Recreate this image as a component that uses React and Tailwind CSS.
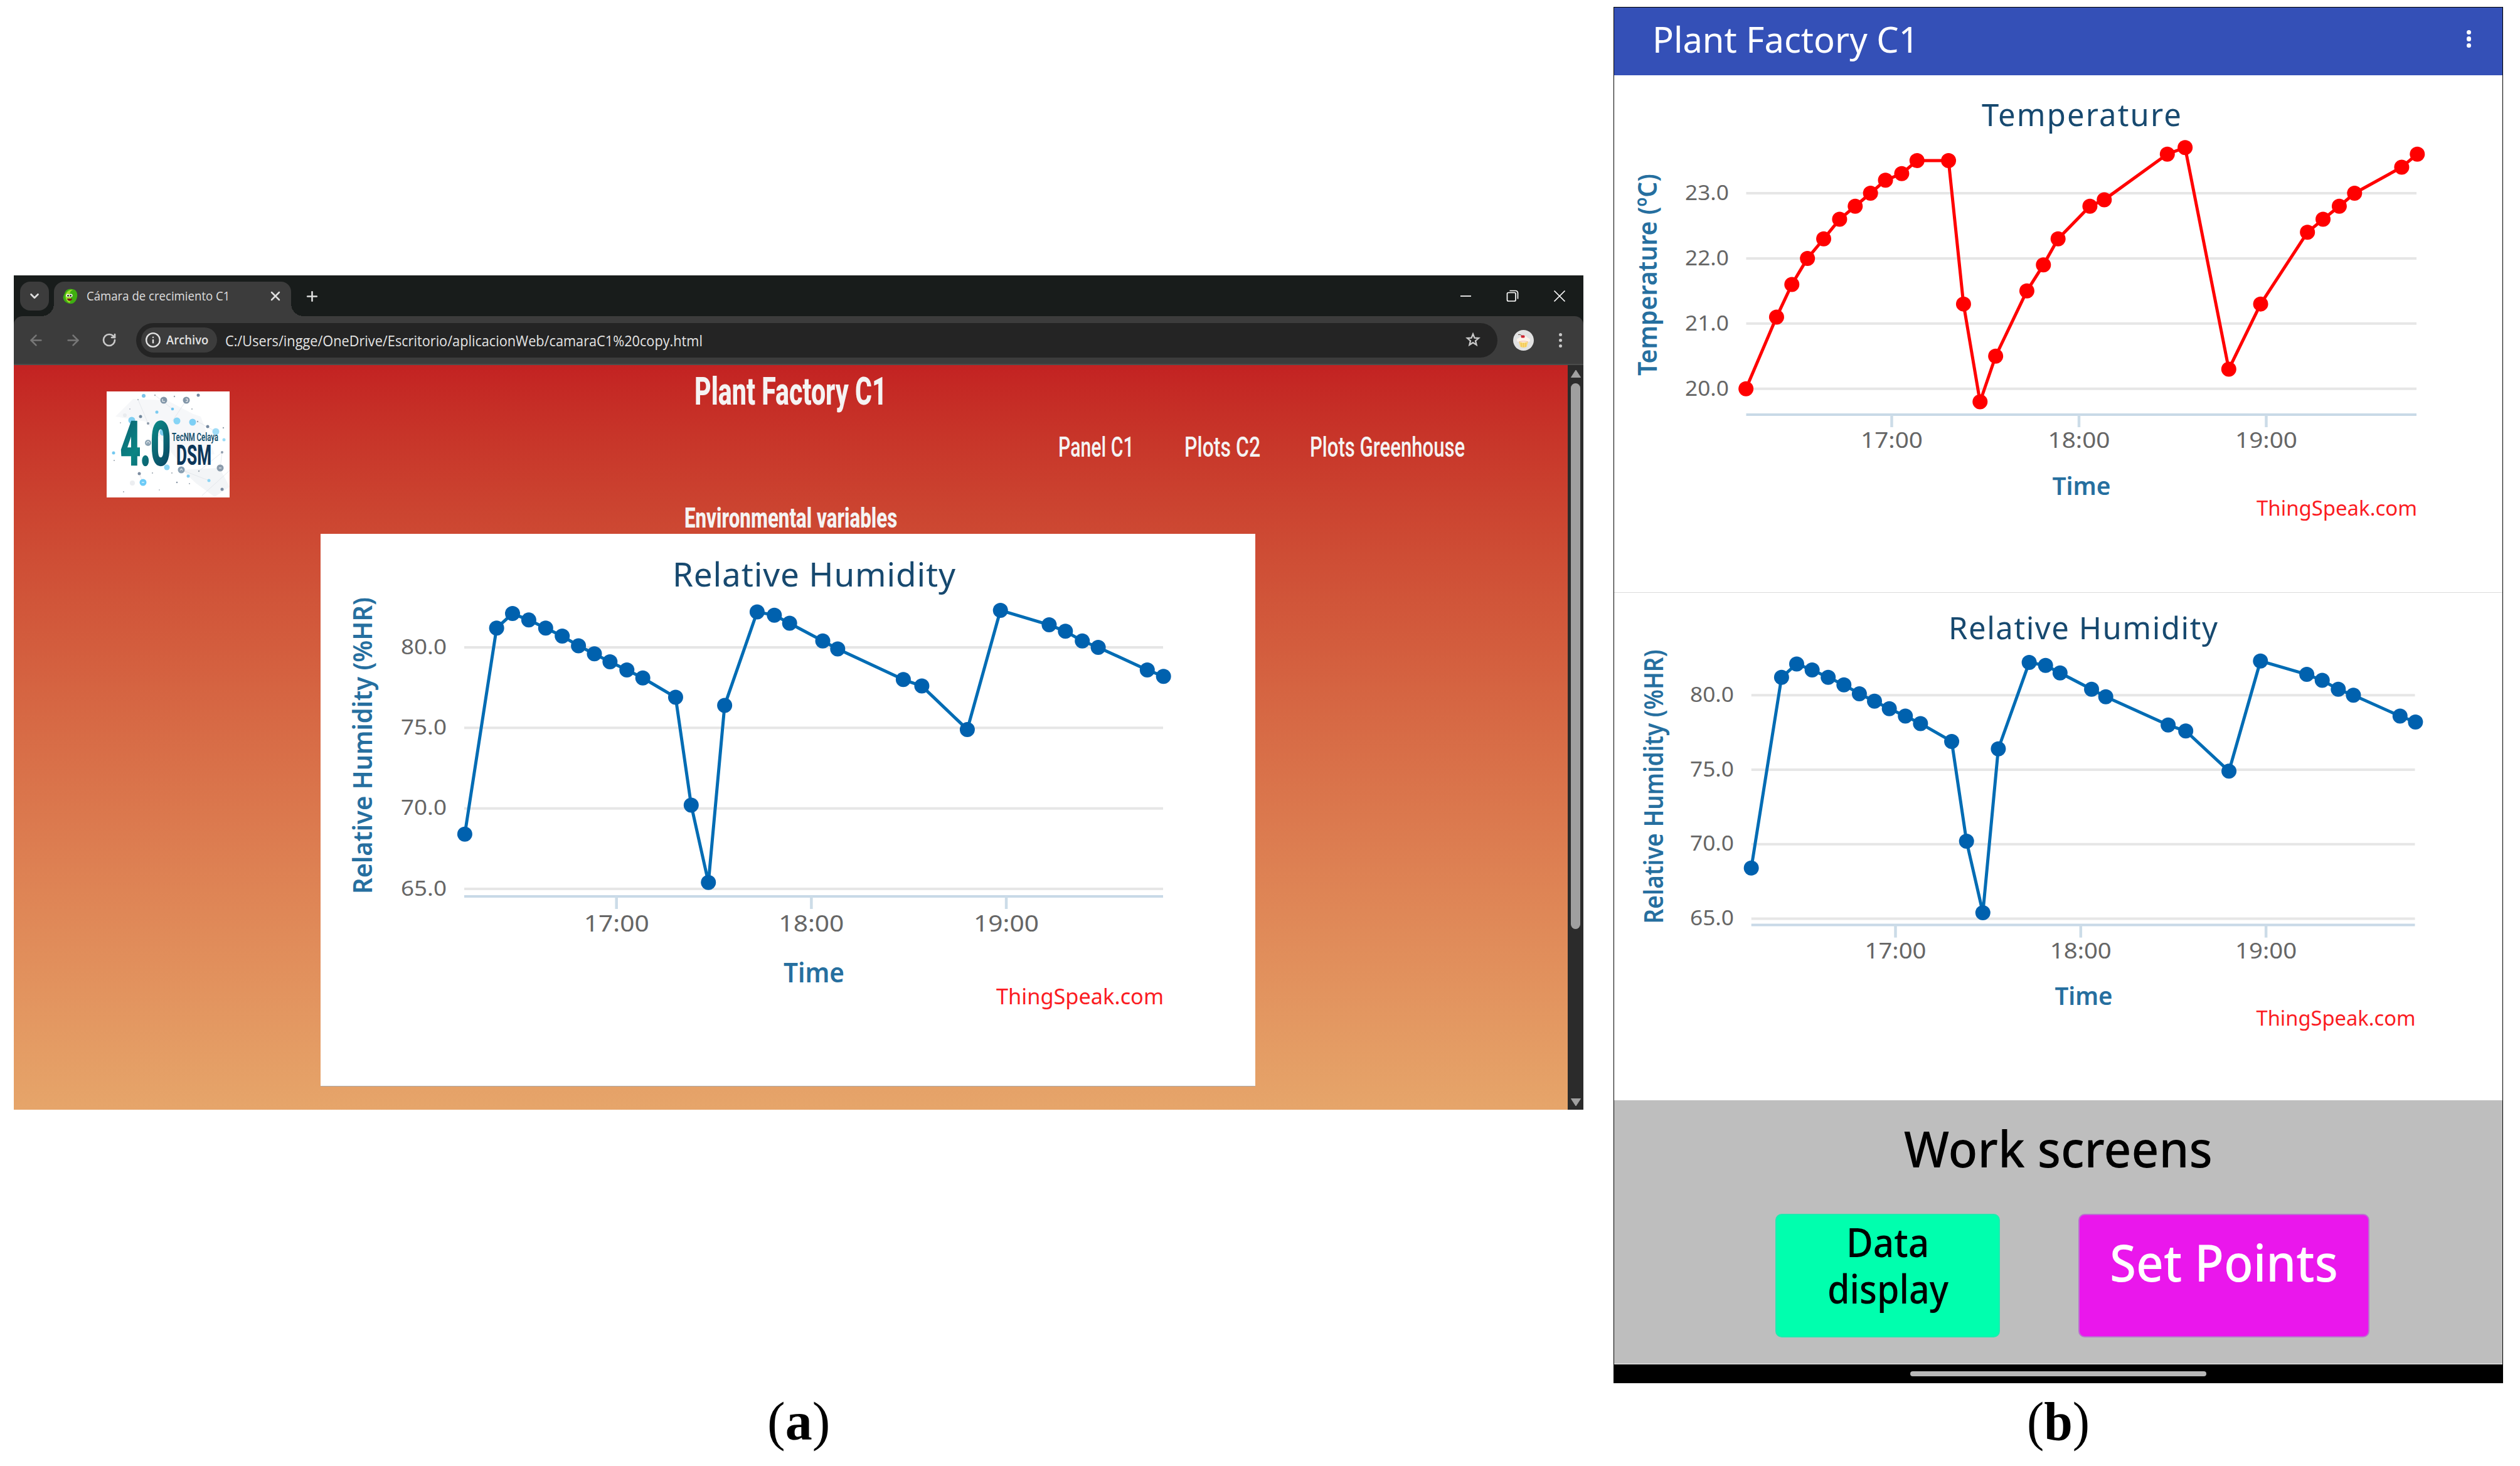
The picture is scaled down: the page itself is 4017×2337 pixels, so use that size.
import { useLayoutEffect, useRef, useState } from 'react';
import { ArrowLeft, ArrowRight, ChevronDown, Info, Plus, RotateCw, X } from 'lucide-react';

// minutes relative to 17:00
const TIMES = [
  -46.7, -36.9, -32, -27, -21.8, -16.7, -11.7, -6.8, -2, 3.2, 8.1, 18.2, 23, 28.3, 33.3,
  43.3, 48.6, 53.3, 63.5, 68.1, 88.3, 94, 108, 118.2, 133.2, 138.2, 143.4, 148.3, 163.4, 168.4,
];

const HUMIDITY = [
  68.4, 81.2, 82.1, 81.7, 81.2, 80.7, 80.1, 79.6, 79.1, 78.6, 78.1, 76.9, 70.2, 65.4, 76.4,
  82.2, 82, 81.5, 80.4, 79.9, 78, 77.6, 74.9, 82.3, 81.4, 81, 80.4, 80, 78.6, 78.2,
];

const TEMPERATURE = [
  20, 21.1, 21.6, 22, 22.3, 22.6, 22.8, 23, 23.2, 23.3, 23.5, 23.5, 21.3, 19.8, 20.5,
  21.5, 21.9, 22.3, 22.8, 22.9, 23.6, 23.7, 20.3, 21.3, 22.4, 22.6, 22.8, 23, 23.4, 23.6,
];

const webHumidityChart = {
  width: 1490,
  height: 881,
  color: '#0061ae',
  lineColor: '#006cb4',
  values: HUMIDITY,
  left: 229,
  right: 1343,
  originX: 471.7,
  perMinute: 5.178,
  ticks: [80, 75, 70, 65],
  topY: 181,
  perUnit: 25.67,
  axisY: 578,
  title: { text: 'Relative Humidity', x: 561, y: 84, length: 451, size: 53 },
  yTitle: { text: 'Relative Humidity (%HR)', x: 82, y: 337.5, length: 473, size: 42 },
  yLabel: { x: 200, length: 73, size: 33.5, offset: 10.5 },
  xLabel: { y: 634, length: 104, size: 37 },
  time: { x: 786.5, y: 715, length: 97, size: 43 },
  credit: { y: 750, length: 267, size: 35 },
};

const appTemperatureChart = {
  width: 1416,
  height: 824,
  color: '#ff0000',
  lineColor: '#ff0000',
  values: TEMPERATURE,
  left: 210.5,
  right: 1279,
  originX: 442.5,
  perMinute: 4.975,
  ticks: [23, 22, 21, 20],
  topY: 188,
  perUnit: 103.9,
  axisY: 541,
  title: { text: 'Temperature', x: 586, y: 81, length: 318, size: 49 },
  yTitle: { text: 'Temperature (ºC)', x: 68, y: 318, length: 322, size: 41 },
  yLabel: { x: 182, length: 70, size: 32, offset: 11 },
  xLabel: { y: 594, length: 99, size: 35 },
  time: { x: 745, y: 669, length: 93, size: 40 },
  credit: { y: 702, length: 256, size: 33 },
};

const appHumidityChart = {
  width: 1416,
  height: 809,
  color: '#0061ae',
  lineColor: '#006cb4',
  values: HUMIDITY,
  left: 218.7,
  right: 1276.5,
  originX: 448.5,
  perMinute: 4.922,
  ticks: [80, 75, 70, 65],
  topY: 163.3,
  perUnit: 23.74,
  axisY: 529.6,
  title: { text: 'Relative Humidity', x: 533, y: 74, length: 429, size: 49 },
  yTitle: { text: 'Relative Humidity (%HR)', x: 77.5, y: 309, length: 437, size: 41 },
  yLabel: { x: 190, length: 70, size: 32, offset: 10.5 },
  xLabel: { y: 582.6, length: 98, size: 35 },
  time: { x: 748.5, y: 656.6, length: 92, size: 40 },
  credit: { y: 690, length: 254, size: 33 },
};

// Squeezes or stretches one line of text to a fixed width
const FitText = ({ width, className = '', children }) => {
  const ref = useRef(null);
  const [scale, setScale] = useState(1);

  useLayoutEffect(() => {
    setScale(width / ref.current.offsetWidth);
  }, [width]);

  return (
    <span className="inline-block whitespace-nowrap" style={{ width }}>
      <span
        ref={ref}
        className={`inline-block origin-left ${className}`}
        style={{ transform: `scaleX(${scale})` }}
      >
        {children}
      </span>
    </span>
  );
};

const Chart = ({ chart }) => {
  const { title, yTitle, yLabel, xLabel, time, credit } = chart;
  const toX = (minute) => chart.originX + minute * chart.perMinute;
  const toY = (value) => chart.topY + (chart.ticks[0] - value) * chart.perUnit;
  const points = chart.values.map((value, i) => [toX(TIMES[i]), toY(value)]);

  return (
    <svg
      width={chart.width}
      height={chart.height}
      viewBox={`0 0 ${chart.width} ${chart.height}`}
      className="block font-['Noto_Sans','Open_Sans',sans-serif]"
    >
      <text x={title.x} y={title.y} fontSize={title.size} textLength={title.length} lengthAdjust="spacing" fill="#17496f">
        {title.text}
      </text>

      {/* grid */}
      {chart.ticks.map((tick) => (
        <g key={tick}>
          <line x1={chart.left} x2={chart.right} y1={toY(tick)} y2={toY(tick)} stroke="#e6e6e6" strokeWidth="4" />
          <text
            x={yLabel.x + 1 - yLabel.length}
            y={toY(tick) + yLabel.offset}
            fontSize={yLabel.size}
            textLength={yLabel.length}
            lengthAdjust="spacingAndGlyphs"
            fill="#666"
          >
            {tick.toFixed(1)}
          </text>
        </g>
      ))}

      {/* time axis */}
      <line x1={chart.left} x2={chart.right} y1={chart.axisY} y2={chart.axisY} stroke="#c8d9e7" strokeWidth="4" />
      {['17:00', '18:00', '19:00'].map((label, i) => (
        <g key={label}>
          <line x1={toX(i * 60)} x2={toX(i * 60)} y1={chart.axisY} y2={chart.axisY + 20} stroke="#ccdce8" strokeWidth="4.5" />
          <text
            x={toX(i * 60) - xLabel.length / 2}
            y={xLabel.y}
            fontSize={xLabel.size}
            textLength={xLabel.length}
            lengthAdjust="spacingAndGlyphs"
            fill="#666"
          >
            {label}
          </text>
        </g>
      ))}

      <text
        transform={`translate(${yTitle.x} ${yTitle.y + yTitle.length / 2}) rotate(-90)`}
        fontSize={yTitle.size}
        fontWeight="600"
        textLength={yTitle.length}
        lengthAdjust="spacingAndGlyphs"
        fill="#266f9f"
      >
        {yTitle.text}
      </text>
      <text
        x={time.x - time.length / 2}
        y={time.y}
        fontSize={time.size}
        fontWeight="600"
        textLength={time.length}
        lengthAdjust="spacingAndGlyphs"
        fill="#266f9f"
      >
        Time
      </text>
      <text
        x={chart.right + 1 - credit.length}
        y={credit.y}
        fontSize={credit.size}
        textLength={credit.length}
        lengthAdjust="spacingAndGlyphs"
        fill="#fb1b22"
      >
        ThingSpeak.com
      </text>

      {/* series */}
      <polyline points={points.map((p) => p.join(',')).join(' ')} fill="none" stroke={chart.lineColor} strokeWidth="5" strokeLinejoin="round" />
      {points.map(([x, y]) => (
        <circle key={x} cx={x} cy={y} r="12" fill={chart.color} />
      ))}
    </svg>
  );
};

const Favicon = () => (
  <svg width="26" height="26" viewBox="0 0 26 26">
    <path d="M4 9C5 3 11 0 17 2c6 1 8 7 7 12s-3 9-8 11C9 26 3 22 2 17c-1-2 0-5 2-8z" fill="#3fae12" />
    <path d="M6 9c3-5 8-7 11-6-4 2-5 4-4 7 2 3 1 10-1 14C7 22 4 15 6 9z" fill="#9be02a" />
    <circle cx="9" cy="12" r="2.6" fill="#fff" />
    <circle cx="14" cy="12" r="2.6" fill="#fff" />
    <circle cx="9.5" cy="12.4" r="1.3" fill="#111" />
    <circle cx="13.6" cy="12.4" r="1.3" fill="#111" />
    <path d="M8 17h8c-1 5-7 5-8 0z" fill="#7a1420" />
  </svg>
);

const StarIcon = () => (
  <svg width="26" height="26" viewBox="0 0 26 26" className="ml-auto" fill="none" stroke="#c9c9c9" strokeWidth="2.3" strokeMiterlimit="5">
    <path d="M13 3.500L15.470 9.600L22.030 10.060L16.990 14.300L18.580 20.700L13 17.200L7.420 20.700L9 14.300L3.970 10.060L10.530 9.600Z" />
  </svg>
);

const Avatar = () => (
  <svg width="33" height="33" viewBox="0 0 33 33">
    <circle cx="16.5" cy="16.5" r="16.5" fill="#e2e2e2" />
    <path d="M9 18h15l-2.500 9q-5 2-10 0z" fill="#f8d873" />
    <path d="M13 20l.5 7M16.500 20v7.500M20 20l-.5 7" stroke="#efc04f" strokeWidth="0.900" />
    <path d="M6 17c-.5-3 2-4 3.500-4 1-2.500 4-3.500 7-3.500s6 1 7 3.500c2 0 4 1.500 3.500 4-.5 2-3 2.500-4.500 2-3 1.500-9 1.500-12 0-1.500.5-4 0-4.500-2z" fill="#fdf3ea" />
    <path d="M9 19c4-1.500 11-1.500 15 0" stroke="#f1b99d" fill="none" />
    <rect x="12.500" y="8.500" width="6" height="4" rx="1.500" fill="#cb2330" />
    <path d="M13.500 9c-1-1.500-3-2-5.500-1.500" stroke="#5b4038" fill="none" />
  </svg>
);

const LOGO_DOTS = [
  [59, 7, 3, '#7cc4ea'], [91, 14, 5.5, '#8296a8'], [127, 14, 5.5, '#8296a8'], [146, 6, 2.5, '#7488a0'],
  [105, 28, 2.3, '#6cc4f0'], [80, 33, 2.5, '#7ccbf0'], [54, 40, 2.5, '#70869c'], [40, 46, 5.5, '#80d0f2'],
  [112, 47, 5.5, '#86d4f5'], [137, 49, 5.5, '#7dcff5'], [161, 56, 2.5, '#7488a0'], [174, 64, 5.5, '#a0dcf7'],
  [187, 77, 2.5, '#9cdcf7'], [90, 65, 5.5, '#80cdf0'], [66, 82, 5, '#8da3b3'], [11, 98, 2.5, '#74c9f0'],
  [184, 97, 2, '#8f9cad'], [181, 122, 5.5, '#8c9cac'], [119, 125, 5.5, '#8aa0b2'], [96, 121, 4.5, '#8ed6f5'],
  [52, 131, 2.5, '#7c8da1'], [130, 135, 2.5, '#84cff3'], [58, 145, 5.5, '#6ccbf7'], [163, 142, 2.5, '#8fd5f4'],
  [184, 156, 2.5, '#7c8da1'], [41, 146, 4, '#eceef1'], [29, 38, 3, '#e8ebee'], [50, 13, 1, '#9aa4af'],
  [77, 6, 1.2, '#a6adb5'], [108, 8, 1.2, '#9aa4af'], [136, 28, 1, '#9aa4af'], [66, 51, 2, '#8c99a8'],
  [145, 48, 1.2, '#9aa4af'], [186, 58, 1.2, '#9aa4af'], [12, 110, 1, '#9aa4af'], [73, 130, 1, '#9aa4af'],
  [112, 145, 1.3, '#8c99a8'], [132, 147, 1, '#9aa4af'], [104, 130, 1, '#9aa4af'], [27, 160, 1, '#9aa4af'],
  [84, 157, 1, '#b4bbc4'], [147, 127, 1.2, '#9aa4af'], [22, 50, 1, '#b4bbc4'], [37, 28, 1, '#b4bbc4'],
];

const Logo = () => (
  <svg width="196" height="169" viewBox="0 0 196 169" className="font-['Roboto',sans-serif]">
    <defs>
      <linearGradient id="logoInk" x1="0" y1="0" x2="1" y2="1">
        <stop offset="0" stopColor="#0a5a6e" />
        <stop offset="0.45" stopColor="#0b8584" />
        <stop offset="1" stopColor="#0b3358" />
      </linearGradient>
    </defs>
    <rect width="196" height="169" fill="#fff" />
    <path d="M14 40L42 12l54 2 42 22 12 4 22 60-60 8-50-60z" fill="#f6f7f9" />
    <path d="M120 125l60-3 16 30-24 16-30-22z" fill="#f3f5f7" />
    <path
      d="M50 13l16 38M77 6l28 22M127 14l-22 33M145 48l29 16M184 97l-37 30M119 125l44 17M58 145l-6-14M152 166l44-40M66 82l24-17M184 97l-3 25"
      stroke="#dfe3e8"
      strokeWidth="0.8"
    />
    {LOGO_DOTS.map(([x, y, r, fill]) => (
      <circle key={`${x}-${y}`} cx={x} cy={y} r={r} fill={fill} />
    ))}
    <path d="M89 12v4h4M126 12h3v4h-3M56 145h4M179 122h4M117 126l2-3 2 3M64 83v-2l2-2 2 2v2" stroke="#fff" fill="none" />
    <text
      x="22"
      y="117"
      fontSize="97"
      fontWeight="800"
      textLength="80"
      lengthAdjust="spacingAndGlyphs"
      fill="url(#logoInk)"
      stroke="url(#logoInk)"
      strokeWidth="2.5"
    >
      4.0
    </text>
    <text x="104" y="78.5" fontSize="18" fontWeight="600" textLength="74" lengthAdjust="spacingAndGlyphs" fill="#14506e">
      TecNM Celaya
    </text>
    <text x="111" y="116.5" fontSize="45" fontWeight="800" textLength="56" lengthAdjust="spacingAndGlyphs" fill="#0d3659">
      DSM
    </text>
  </svg>
);

const TabStrip = () => (
  <div className="flex h-[65px] items-start pt-[10px] pl-[10px] text-[#dedede]">
    <div className="flex h-[46px] w-[46px] items-center justify-center rounded-[16px] bg-[#3c3c3c]">
      <ChevronDown size={22} strokeWidth={3} />
    </div>
    <span className="-ml-3 h-5 w-5 self-end bg-[radial-gradient(circle_at_0_0,transparent_20px,#3c3c3c_20px)]" />
    <div className="h-[55px] w-[378px] rounded-t-[16px] bg-[#3c3c3c]">
      <div className="flex h-[46px] items-center pl-[13px]">
        <Favicon />
        <span className="ml-[13px] font-['Open_Sans','Noto_Sans',sans-serif] text-[19.5px] leading-[26px]">
          <FitText width={228}>Cámara de crecimiento C1</FitText>
        </span>
        <X size={24} strokeWidth={2.5} className="ml-[61px]" />
      </div>
    </div>
    <span className="h-5 w-5 self-end bg-[radial-gradient(circle_at_100%_0,transparent_20px,#3c3c3c_20px)]" />
    <div className="flex h-[46px] flex-1 items-center pr-[28px] text-white">
      <Plus size={25} strokeWidth={2.5} className="ml-px text-[#dedede]" />
      <span className="ml-auto h-[1.5px] w-[17px] bg-[#ddd]" />
      <svg width="20" height="20" viewBox="0 0 20 20" className="ml-[56px]" fill="none" stroke="currentColor" strokeWidth="1.7">
        <rect x="1.5" y="4.5" width="13.5" height="13.5" rx="2" />
        <path d="M5.500 1.500H15a3.500 3.500 0 0 1 3.500 3.500v9.500" />
      </svg>
      <svg width="20" height="20" viewBox="0 0 20 20" className="ml-[55px]" fill="none" stroke="currentColor" strokeWidth="1.7">
        <path d="M1.500 1.500l17 17M18.500 1.500l-17 17" />
      </svg>
    </div>
  </div>
);

const Toolbar = () => (
  <div className="flex h-[78px] items-center rounded-t-[14px] border-b-2 border-[#4b4c4b] bg-[#3c3c3c] pl-[22px] font-['Open_Sans','Noto_Sans',sans-serif] text-[#c9c9c9]">
    <ArrowLeft size={27} strokeWidth={2.2} className="text-[#777]" />
    <ArrowRight size={27} strokeWidth={2.2} className="ml-[32px] text-[#777]" />
    <RotateCw size={24} strokeWidth={2.7} className="ml-[32px]" />
    <div className="ml-[31px] flex h-[55px] w-[2170px] items-center rounded-full bg-[#242424] pr-[26px] pl-2">
      <div className="flex h-[40px] w-[121px] items-center rounded-full bg-[#3c3c3c] pl-[6px] text-[#e3e3e3]">
        <Info size={26} strokeWidth={2.2} />
        <span className="ml-2 text-[19px] leading-[26px] font-semibold">
          <FitText width={67}>Archivo</FitText>
        </span>
      </div>
      <span className="mt-px ml-[13px] text-[23.5px] leading-[30px] text-[#e3e3e3]">
        <FitText width={761}>C:/Users/ingge/OneDrive/Escritorio/aplicacionWeb/camaraC1%20copy.html</FitText>
      </span>
      <StarIcon />
    </div>
    <span className="ml-[25px]">
      <Avatar />
    </span>
    <div className="ml-[40px] flex flex-col gap-[4px]">
      <span className="h-[5px] w-[5px] rounded-full bg-[#c9c9c9]" />
      <span className="h-[5px] w-[5px] rounded-full bg-[#c9c9c9]" />
      <span className="h-[5px] w-[5px] rounded-full bg-[#c9c9c9]" />
    </div>
  </div>
);

const Scrollbar = () => (
  <div className="flex w-[25px] flex-col items-center bg-[#2b2b2b] pt-[7px] pb-[5px]">
    <svg width="18" height="14" viewBox="0 0 18 14">
      <path d="M9 1l7.500 11.500h-15z" fill="#a0a0a0" stroke="#a0a0a0" strokeLinejoin="round" />
    </svg>
    <div className="mt-[8px] h-[870px] w-[15px] rounded-full bg-[#9f9f9f]" />
    <svg width="18" height="14" viewBox="0 0 18 14" className="mt-auto">
      <path d="M9 13L1.500 1.500h15z" fill="#a0a0a0" stroke="#a0a0a0" strokeLinejoin="round" />
    </svg>
  </div>
);

const WebPage = () => (
  <div className="w-[2477px] bg-linear-to-b from-[#c32222] to-[#e6a56a] font-['Roboto',sans-serif] text-[#f5f3f3]">
    <header className="grid h-[219px] grid-cols-[344px_1789px_344px] grid-rows-[86px_90px_43px]">
      <div className="row-span-3 pt-[42px] pl-[148px]">
        <Logo />
      </div>
      <h1 className="flex items-center justify-center pb-[3px] text-[61px] leading-[60px] font-extrabold">
        <FitText width={307}>Plant Factory C1</FitText>
      </h1>
      <nav className="col-span-2 col-start-2 row-start-2 flex items-center justify-end pr-[164px] pb-px text-[44px] leading-[50px] font-medium">
        <FitText width={121}>Panel C1</FitText>
        <span className="ml-[80px]">
          <FitText width={121}>Plots C2</FitText>
        </span>
        <span className="ml-[79px]">
          <FitText width={247}>Plots Greenhouse</FitText>
        </span>
      </nav>
    </header>
    <h2 className="h-[50px] text-center text-[45px] leading-[49px] font-extrabold">
      <FitText width={339}>Environmental variables</FitText>
    </h2>
    <div className="ml-[489px] h-[881px] w-[1490px] border-b border-[#aaa] bg-white">
      <Chart chart={webHumidityChart} />
    </div>
  </div>
);

const BrowserWindow = () => (
  <div className="h-[1330px] w-[2502px] bg-[#181c1b]">
    <TabStrip />
    <Toolbar />
    <div className="flex h-[1187px]">
      <WebPage />
      <Scrollbar />
    </div>
  </div>
);

const PhoneApp = () => (
  <div className="h-[2194px] w-[1418px] border-x border-t border-black bg-white font-['Noto_Sans','Open_Sans',sans-serif]">
    <div className="flex h-[108px] items-center justify-between bg-[#3450b7] pr-[50px] pb-[8px] pl-[61px] text-white">
      <span className="text-[57px] leading-[70px]">
        <FitText width={425}>Plant Factory C1</FitText>
      </span>
      <div className="flex flex-col gap-[3px]">
        <span className="h-[7.5px] w-[7.5px] rounded-full bg-white" />
        <span className="h-[7.5px] w-[7.5px] rounded-full bg-white" />
        <span className="h-[7.5px] w-[7.5px] rounded-full bg-white" />
      </div>
    </div>
    <Chart chart={appTemperatureChart} />
    <div className="h-px bg-[#dcdcdc]" />
    <Chart chart={appHumidityChart} />
    <div className="h-[420px] bg-[#bebebe]">
      <div className="flex h-[152px] items-center justify-center pt-[2px] text-[79px] leading-[100px] font-medium text-black">
        <FitText width={492}>Work screens</FitText>
      </div>
      <div className="mt-[29px] flex gap-[125px] pl-[257px]">
        <button className="flex h-[197px] w-[358px] flex-col items-center rounded-[10px] border-2 border-[#1cecb0] bg-[#00ffae] pt-[6px] text-[63px] leading-[74px] font-medium text-black">
          <FitText width={132}>Data</FitText>
          <FitText width={193}>display</FitText>
        </button>
        <button className="flex h-[197px] w-[464px] justify-center rounded-[10px] border-2 border-[#bb70d0] bg-[#ea17ec] pt-[29px] text-[82px] leading-[90px] font-medium text-white">
          <FitText width={364}>Set Points</FitText>
        </button>
      </div>
    </div>
    <div className="h-px bg-white" />
    <div className="flex h-[30px] items-start justify-center bg-black pt-[11px]">
      <span className="h-[8px] w-[472px] rounded-full bg-[#b8b8b8]" />
    </div>
  </div>
);

const Caption = ({ letter }) => (
  <FitText width={100} className="font-['Liberation_Serif',serif] text-[86px] leading-[80px] text-black">
    (<b>{letter}</b>)
  </FitText>
);

const App = () => {
  return (
    <div className="flex h-[2337px] w-[4017px] items-start gap-[48px] overflow-hidden bg-white pl-[22px]">
      <figure className="flex flex-col items-center pt-[439px]">
        <BrowserWindow />
        <figcaption className="mt-[457px] h-[80px] leading-[80px]">
          <Caption letter="a" />
        </figcaption>
      </figure>
      <figure className="flex flex-col items-center pt-[11px]">
        <PhoneApp />
        <figcaption className="mt-[21px] h-[80px] leading-[80px]">
          <Caption letter="b" />
        </figcaption>
      </figure>
    </div>
  );
};

export default App;
